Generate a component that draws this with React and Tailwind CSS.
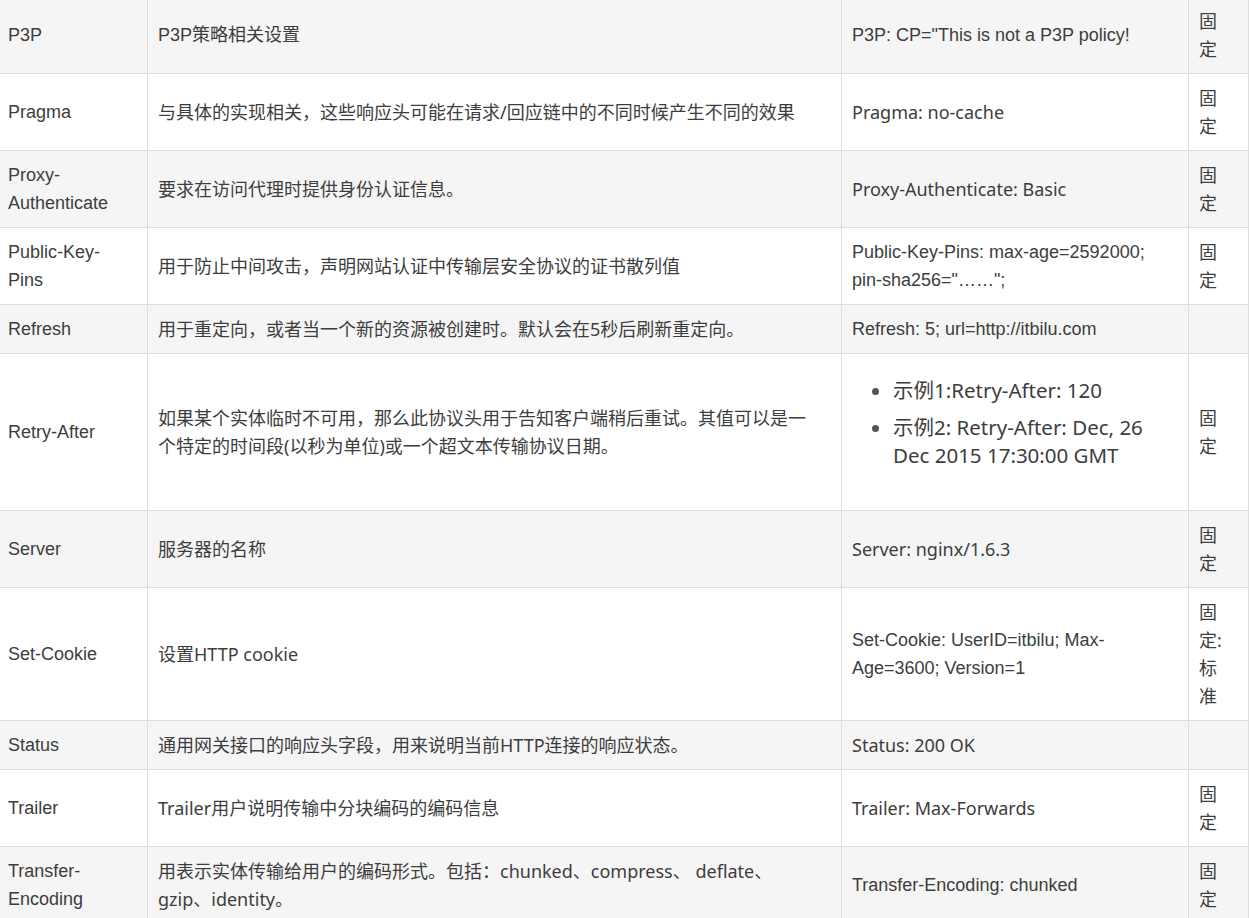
const ARIAL = "font-['Liberation_Sans','Noto_Sans_CJK_SC',sans-serif]";
const YAHEI = "font-['Noto_Sans','Noto_Sans_CJK_SC',sans-serif]";

const rows = [
  { name: "P3P", desc: "P3P策略相关设置", descFont: ARIAL, example: 'P3P: CP="This is not a P3P policy!', exFont: ARIAL, status: "固定" },
  { name: "Pragma", desc: "与具体的实现相关，这些响应头可能在请求/回应链中的不同时候产生不同的效果", example: "Pragma: no-cache", exFont: YAHEI, status: "固定" },
  { name: ["Proxy-", "Authenticate"], desc: "要求在访问代理时提供身份认证信息。", example: "Proxy-Authenticate: Basic", exFont: YAHEI, status: "固定" },
  { name: ["Public-Key-", "Pins"], desc: "用于防止中间攻击，声明网站认证中传输层安全协议的证书散列值", example: ["Public-Key-Pins: max-age=2592000;", 'pin-sha256="……";'], exFont: ARIAL, status: "固定" },
  { name: "Refresh", desc: "用于重定向，或者当一个新的资源被创建时。默认会在5秒后刷新重定向。", example: "Refresh: 5; url=http://itbilu.com", exFont: ARIAL, status: "" },
  { name: "Retry-After", desc: ["如果某个实体临时不可用，那么此协议头用于告知客户端稍后重试。其值可以是一", "个特定的时间段(以秒为单位)或一个超文本传输协议日期。"], list: [["示例1:Retry-After: 120"], ["示例2: Retry-After: Dec, 26", "Dec 2015 17:30:00 GMT"]], status: "固定" },
  { name: "Server", desc: "服务器的名称", example: "Server: nginx/1.6.3", exFont: YAHEI, status: "固定" },
  { name: "Set-Cookie", desc: "设置HTTP cookie", example: ["Set-Cookie: UserID=itbilu; Max-", "Age=3600; Version=1"], exFont: ARIAL, status: "固定:标准" },
  { name: "Status", desc: "通用网关接口的响应头字段，用来说明当前HTTP连接的响应状态。", example: "Status: 200 OK", exFont: YAHEI, status: "" },
  { name: "Trailer", desc: "Trailer用户说明传输中分块编码的编码信息", example: "Trailer: Max-Forwards", exFont: YAHEI, status: "固定" },
  { name: ["Transfer-", "Encoding"], desc: ["用表示实体传输给用户的编码形式。包括：chunked、compress、 deflate、", "gzip、identity。"], example: "Transfer-Encoding: chunked", exFont: ARIAL, status: "固定" },
];

const cell = "border border-[#dddddd] px-[10px] py-[10px] align-middle text-[18px] leading-[28px] text-[#3d3d3d]";

function Lines({ value }) {
  if (!Array.isArray(value)) return value;
  return value.map((line, k) => (
    <span key={k} className="block whitespace-nowrap">{line}</span>
  ));
}

export default function App() {
  return (
    <div className="w-[1249px] h-[918px] overflow-hidden bg-white">
      <table className="table-fixed border-collapse w-[1251px] -mt-[4px] -ml-[3px]">
        <colgroup>
          <col className="w-[150px]" />
          <col className="w-[694px]" />
          <col className="w-[347px]" />
          <col className="w-[60px]" />
        </colgroup>
        <tbody>
          {rows.map((r, i) => (
            <tr key={i} className={i % 2 === 0 ? "bg-[#f5f5f5]" : "bg-white"}>
              <td className={`${cell} ${ARIAL}`}><Lines value={r.name} /></td>
              <td className={`${cell} ${r.descFont || YAHEI}`}><Lines value={r.desc} /></td>
              <td className={`${cell} ${r.exFont || YAHEI}`}>
                {r.list ? (
                  <ul className="list-disc pl-[41px] mt-[12px] mb-[31px] text-[20.5px] leading-[28px] marker:text-[#555]">
                    {r.list.map((li, k) => (
                      <li key={k} className={k > 0 ? "mt-[9px]" : ""}><Lines value={li} /></li>
                    ))}
                  </ul>
                ) : (
                  <Lines value={r.example} />
                )}
              </td>
              <td className={`${cell} ${YAHEI} break-all`}>
                <div className="w-[20px]">{r.status}</div>
              </td>
            </tr>
          ))}
        </tbody>
      </table>
    </div>
  );
}
